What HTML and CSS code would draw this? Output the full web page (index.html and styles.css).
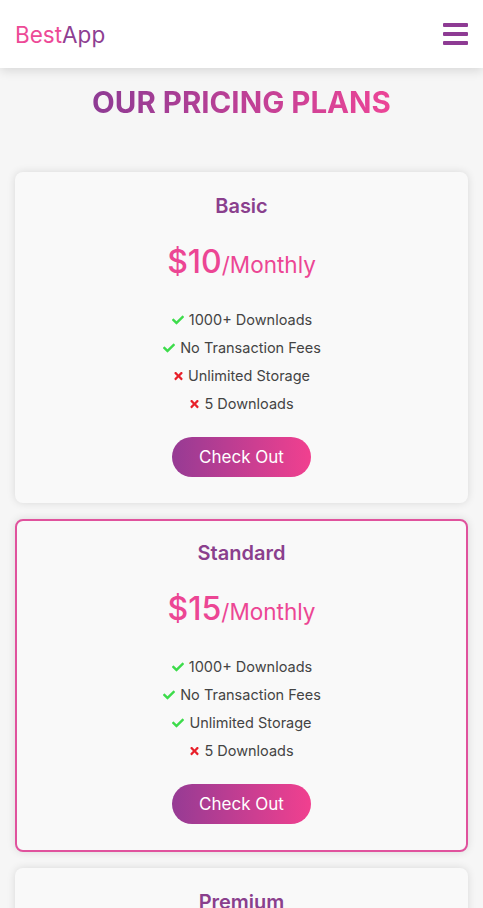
FILE: index.html
```html
<!DOCTYPE html>
<html>
<head>
<meta charset="utf-8">
<link rel="stylesheet" href="styles.css">
</head>
<body>
<svg width="0" height="0" class="defs" aria-hidden="true">
  <symbol id="i-check" viewBox="0 0 512 512"><path d="M173.898 439.404l-166.4-166.4c-9.997-9.997-9.997-26.206 0-36.204l36.203-36.204c9.997-9.998 26.207-9.998 36.204 0L192 312.69 432.095 72.596c9.997-9.997 26.207-9.997 36.204 0l36.203 36.204c9.997 9.997 9.997 26.206 0 36.204l-294.4 294.401c-9.998 9.997-26.207 9.997-36.204-.001z"/></symbol>
  <symbol id="i-x" viewBox="0 0 352 512"><path d="M242.72 256l100.07-100.07c12.28-12.28 12.28-32.19 0-44.48l-22.24-22.24c-12.28-12.28-32.19-12.28-44.48 0L176 189.28 75.93 89.21c-12.28-12.28-32.19-12.28-44.48 0L9.21 111.45c-12.28 12.28-12.28 32.19 0 44.48L109.28 256 9.21 356.07c-12.28 12.28-12.28 32.19 0 44.48l22.24 22.24c12.28 12.28 32.2 12.28 44.48 0L176 322.72l100.07 100.07c12.28 12.28 32.2 12.28 44.48 0l22.24-22.24c12.28-12.28 12.28-32.19 0-44.48L242.72 256z"/></symbol>
</svg>
<header class="topbar">
  <div class="logo"><span class="logo-a">Best</span><span class="logo-b">App</span></div>
  <div class="burger"><span></span><span></span><span></span></div>
</header>
<main class="content">
  <h1 class="title">OUR PRICING PLANS</h1>
  <div class="cards">
    <section class="card">
      <h2 class="plan">Basic</h2>
      <div class="price"><span class="amount">$10</span><span class="per">/Monthly</span></div>
      <ul class="features">
        <li><svg class="ic ok"><use href="#i-check"/></svg>1000+ Downloads</li>
        <li><svg class="ic ok"><use href="#i-check"/></svg>No Transaction Fees</li>
        <li><svg class="ic no"><use href="#i-x"/></svg>Unlimited Storage</li>
        <li><svg class="ic no"><use href="#i-x"/></svg>5 Downloads</li>
      </ul>
      <button class="btn">Check Out</button>
    </section>
    <section class="card featured">
      <h2 class="plan">Standard</h2>
      <div class="price"><span class="amount">$15</span><span class="per">/Monthly</span></div>
      <ul class="features">
        <li><svg class="ic ok"><use href="#i-check"/></svg>1000+ Downloads</li>
        <li><svg class="ic ok"><use href="#i-check"/></svg>No Transaction Fees</li>
        <li><svg class="ic ok"><use href="#i-check"/></svg>Unlimited Storage</li>
        <li><svg class="ic no"><use href="#i-x"/></svg>5 Downloads</li>
      </ul>
      <button class="btn">Check Out</button>
    </section>
    <section class="card">
      <h2 class="plan">Premium</h2>
      <div class="price"><span class="amount">$20</span><span class="per">/Monthly</span></div>
      <ul class="features">
        <li><svg class="ic ok"><use href="#i-check"/></svg>1000+ Downloads</li>
        <li><svg class="ic ok"><use href="#i-check"/></svg>No Transaction Fees</li>
        <li><svg class="ic ok"><use href="#i-check"/></svg>Unlimited Storage</li>
        <li><svg class="ic ok"><use href="#i-check"/></svg>5 Downloads</li>
      </ul>
      <button class="btn">Check Out</button>
    </section>
  </div>
</main>
</body>
</html>
```
FILE: styles.css
```css
* { box-sizing: border-box; }
body {
  margin: 0;
  background: #f6f6f6;
  font-family: "Inter", "Open Sans", sans-serif;
}
.defs { position: absolute; width: 0; height: 0; overflow: hidden; }
.topbar {
  height: 68px;
  background: #fff;
  box-shadow: 0 3px 10px rgba(0,0,0,0.12);
  display: flex;
  align-items: center;
  justify-content: space-between;
  padding: 0 15px;
  position: relative;
  z-index: 2;
}
.logo {
  font-size: 22.5px;
  font-weight: 400;
  margin-top: 1px;
}
.logo-a { color: #ed4a97; }
.logo-b { color: #8e3f92; }
.burger {
  width: 25px;
  display: flex;
  flex-direction: column;
  gap: 5px;
}
.burger span {
  display: block;
  height: 4px;
  background: #8e3b94;
  border-radius: 1px;
}
.content {
  padding: 19px 15px 0;
}
.title {
  margin: 0 auto 55px;
  text-align: center;
  font-size: 29.5px;
  font-weight: 700;
  line-height: 30px;
  background: linear-gradient(90deg, #8e3b94, #ec4597);
  -webkit-background-clip: text;
  background-clip: text;
  color: transparent;
  width: max-content;
}
.cards {
  display: flex;
  flex-direction: column;
  gap: 16px;
}
.card {
  background: #f9f9f9;
  border: 2px solid transparent;
  border-radius: 8px;
  box-shadow: 0 0 8px rgba(0,0,0,0.12);
  padding: 18px 0 20px;
  display: flex;
  flex-direction: column;
  align-items: center;
  height: 331px;
}
.card.featured {
  border-color: #e0529d;
  height: 333px;
}
.plan {
  margin: 0;
  font-size: 20px;
  font-weight: 600;
  color: #8a3f8d;
  line-height: 28px;
}
.price {
  margin-top: 22px;
  color: #ec4694;
  line-height: 40px;
}
.amount { font-size: 32px; font-weight: 500; }
.per { font-size: 22.5px; font-weight: 400; }
.features {
  list-style: none;
  margin: 19px 0 0;
  padding: 0;
  text-align: center;
}
.features li {
  font-size: 14.5px;
  line-height: 28px;
  color: #444;
}
.ic {
  display: inline-block;
  vertical-align: -1px;
  margin-right: 4px;
}
.ic.ok { width: 14px; height: 12px; fill: #3ddc4b; }
.ic.no { width: 11px; height: 12px; fill: #e8202a; }
.btn {
  margin-top: 19px;
  width: 139px;
  height: 40px;
  border: none;
  border-radius: 20px;
  background: linear-gradient(90deg, #963b94, #f1408f);
  color: #fff;
  font-family: inherit;
  font-size: 17px;
  font-weight: 400;
}
```
